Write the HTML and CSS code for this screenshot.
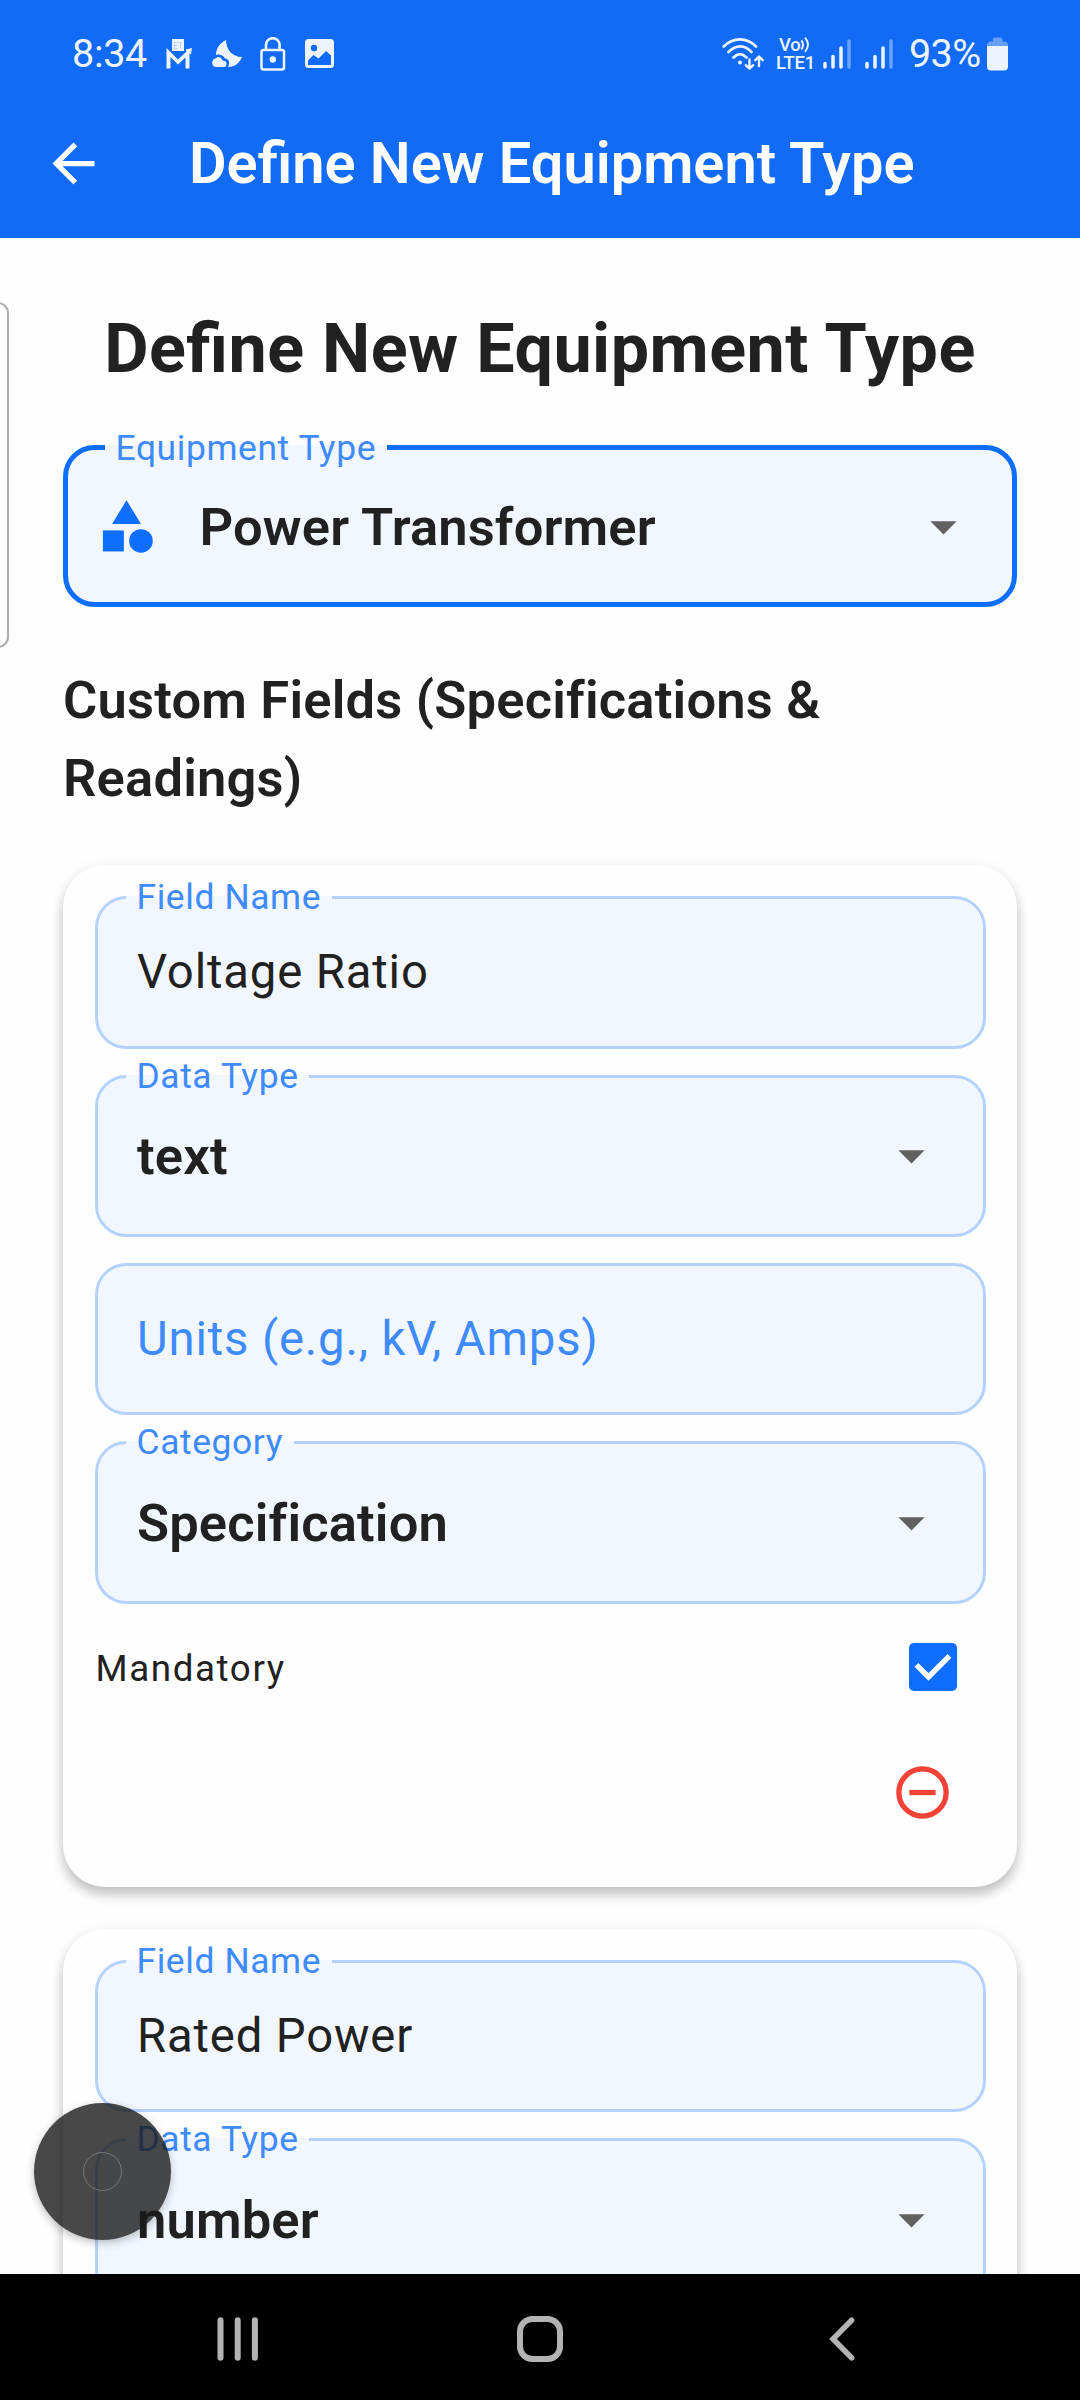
FILE: index.html
```html
<!DOCTYPE html>
<html lang="en">
<head>
<meta charset="utf-8">
<title>Define New Equipment Type</title>
<link rel="stylesheet" href="styles.css">
</head>
<body>
<div class="screen">
  <header class="top">
    <div class="status">
      <div class="status-left">
        <span class="clock">8:34</span>
        <svg class="st-m" viewBox="0 0 27 30" width="27" height="30"><rect x="6" y="0" width="12" height="12" fill="#eef4ff"/><path d="M8 3.500h3.500M8 6.500h3M8 9.500h3.500M8.500 3.500v6M12.500 3.500h4M14.500 3.500v6" stroke="#a9c6fb" stroke-width=".8" fill="none"/><path d="M.5 29.500V9L12 20.500 20.500 12.500 19.500 10.500 26 9 25 15.500 23.500 14.500V29.500H19.500V18.500L12 25.500 4.500 18V29.500Z" fill="#eef4ff"/></svg>
        <svg class="st-moon" viewBox="0 0 31 28" width="31" height="28"><path d="M15 0C15 9 21 17 31 17 28 24 23 27 17 27 19.500 23 18 19 14 18.500 11.500 14.500 8 14 5 15 5 8 9 3 15 0Z" fill="#eef4ff"/><path d="M4.500 27A4.400 4.400 0 0 1 4.500 18.500C7 15.500 10.500 17 11.500 20.500 17 20.500 16.500 27 13 27Z" fill="#eef4ff"/></svg>
        <svg class="st-lock" viewBox="0 0 26 34" width="26" height="34"><rect x="1.500" y="13" width="22.500" height="19.500" rx="2" fill="none" stroke="#eef4ff" stroke-width="2.500"/><path d="M6 13V8a6.800 6.800 0 0 1 13.600 0v5" fill="none" stroke="#eef4ff" stroke-width="2.600"/><circle cx="12.800" cy="22.500" r="3.200" fill="#eef4ff"/></svg>
        <svg class="st-img" viewBox="0 0 29 29" width="29" height="29"><rect width="29" height="29" rx="3.500" fill="#eef4ff"/><circle cx="9" cy="9" r="3.200" fill="#116bf4"/><path d="M3 21.500 8.500 16l5 3.500L21 12l5 4.500v9.500H3Z" fill="#116bf4"/></svg>
      </div>
      <div class="status-right">
        <svg viewBox="0 0 43 33" width="43" height="33" fill="none" stroke="#eef4ff" stroke-width="2.700" stroke-linecap="round"><path d="M1.800 9.500C11 0 25 0 34 9.500M6.500 15C14 7.500 22.500 7.500 29.500 15M11.500 20.500C16 16 20 16 24.500 20.500"/><circle cx="18" cy="25.500" r="2" fill="#eef4ff" stroke="none"/><path d="M27.500 22.500v9M23.800 28.200l3.700 3.500 3.700-3.500M37 29v-9M33.300 23.200l3.700-3.500 3.700 3.500" stroke-width="2.400"/></svg>
        <div class="volte">
          <div class="vo">Vo<svg viewBox="0 0 12 18" width="11" height="17" fill="none" stroke="#eef4ff" stroke-width="2"><path d="M1.500 4.500q3.500 4.500 0 10M5.500 1.500q6.500 7.500 0 15.500"/></svg></div>
          <div class="lte">LTE1</div>
        </div>
        <svg class="sig" viewBox="0 0 29 30" width="29" height="30" stroke-width="3.500" stroke-linecap="round" stroke="#eef4ff"><path d="M2 24.500V28M10 17.500V28M18 9V28"/><path d="M26 2V28" stroke="#6ba2fb"/></svg>
        <svg class="sig sig2" viewBox="0 0 29 30" width="29" height="30" stroke-width="3.500" stroke-linecap="round" stroke="#eef4ff"><path d="M2 24.500V28M10 17.500V28M18 9V28"/><path d="M26 2V28" stroke="#6ba2fb"/></svg>
        <span class="pct">93%</span>
        <svg viewBox="0 0 21 34" width="21" height="34"><path d="M0 9V8Q0 4.500 4 4.500H6V2Q6 .5 7.500 .5H14Q15.500 .5 15.500 2V4.500H17Q21 4.500 21 8V9Z" fill="#659ff9"/><path d="M0 9H21V29.500Q21 33.500 17 33.500H4Q0 33.500 0 29.500Z" fill="#eef4ff"/></svg>
      </div>
    </div>
    <div class="appbar">
      <svg class="back" viewBox="0 0 24 24" width="63" height="63"><path d="M20 11H7.830l5.590-5.590L12 4l-8 8 8 8 1.410-1.410L7.830 13H20z" fill="#fff"/></svg>
      <h1 class="bar-title">Define New Equipment Type</h1>
    </div>
  </header>

  <main class="content">
    <h2 class="heading">Define New Equipment Type</h2>
    <div class="field select active">
      <span class="label">Equipment Type</span>
      <svg class="category" viewBox="0 0 24 24" width="63" height="63" fill="#0d6eff"><path d="M12 2l-5.500 9h11z"/><circle cx="17.500" cy="17.500" r="4.500"/><path d="M3 13.500h8v8H3z"/></svg>
      <span class="value strong">Power Transformer</span>
      <svg class="caret" viewBox="0 0 24 24" width="63" height="63"><path d="M7 10l5 5 5-5z"/></svg>
    </div>
    <h3 class="subheading">Custom Fields (Specifications &amp; Readings)</h3>

    <section class="card">
      <div class="field"><span class="label">Field Name</span><span class="value">Voltage Ratio</span></div>
      <div class="field select"><span class="label">Data Type</span><span class="value strong">text</span><svg class="caret" viewBox="0 0 24 24" width="63" height="63"><path d="M7 10l5 5 5-5z"/></svg></div>
      <div class="field"><span class="value hint">Units (e.g., kV, Amps)</span></div>
      <div class="field select"><span class="label">Category</span><span class="value strong">Specification</span><svg class="caret" viewBox="0 0 24 24" width="63" height="63"><path d="M7 10l5 5 5-5z"/></svg></div>
      <div class="actions">
        <div class="row"><span class="mandatory">Mandatory</span><svg class="check" viewBox="0 0 18 18" width="48" height="48"><rect width="18" height="18" rx="1.800" fill="#0d6eff"/><path d="M2.800 8.200l4.500 4.500 7.900-7.900" fill="none" stroke="#fff" stroke-width="2"/></svg></div>
        <div class="row remove"><svg viewBox="0 0 24 24" width="63" height="63" fill="none" stroke="#f44336" stroke-width="2"><circle cx="12" cy="12" r="9"/><path d="M7 12h10"/></svg></div>
      </div>
    </section>

    <section class="card">
      <div class="field"><span class="label">Field Name</span><span class="value">Rated Power</span></div>
      <div class="field select"><span class="label">Data Type</span><span class="value strong">number</span><svg class="caret" viewBox="0 0 24 24" width="63" height="63"><path d="M7 10l5 5 5-5z"/></svg></div>
    </section>
  </main>

  <nav class="navbar">
    <svg viewBox="0 0 42 44" width="42" height="44" stroke="#b3b3b3" stroke-width="6" stroke-linecap="round"><path d="M3.500 3.200V40.800M20.700 3.200V40.800M37.900 3.200V40.800"/></svg>
    <svg class="nav-home" viewBox="0 0 46 46" width="46" height="46"><rect x="3" y="3" width="40" height="40" rx="12.500" fill="none" stroke="#b3b3b3" stroke-width="6"/></svg>
    <svg class="nav-back" viewBox="0 0 26 44" width="26" height="44"><path d="M22.600 3.200L4 22 22.600 40.800" fill="none" stroke="#b3b3b3" stroke-width="5.500" stroke-linecap="round"/></svg>
  </nav>

  <div class="edge-handle"></div>
  <div class="assist"><div class="assist-ring"></div></div>
</div>
</body>
</html>
```
FILE: styles.css
```css
* { box-sizing: border-box; margin: 0; padding: 0; }
body { background: #fefefe; font-family: Roboto, "Noto Sans", sans-serif; color: #212121; }
svg { display: block; flex: none; }
.screen { position: relative; width: 1080px; height: 2400px; overflow: hidden; display: flex; flex-direction: column; }

.top { height: 238px; background: #116bf4; color: #fff; flex: none; }
.status { height: 90px; display: flex; justify-content: space-between; padding: 0 72px 0 72px; color: #eef4ff; }
.status-left, .status-right { display: flex; align-items: center; padding-top: 17px; }
.clock, .pct { font-size: 39.5px; line-height: 46px; white-space: nowrap; }
.clock { width: 94px; letter-spacing: -0.3px; }
.st-moon { margin-left: 18px; }
.st-lock { margin-left: 18px; }
.st-img { margin-left: 19px; }
.volte { width: 40px; margin-left: 11px; font-weight: 500; font-size: 18.500px; line-height: 18px; white-space: nowrap; }
.vo { display: flex; align-items: center; padding-left: 3px; letter-spacing: -0.3px; }
.lte { letter-spacing: -0.2px; }
.sig { margin-left: 7px; }
.sig2 { margin-left: 13px; }
.pct { width: 78px; margin-left: 15px; letter-spacing: -0.6px; }

.appbar { height: 147px; display: flex; align-items: center; padding-left: 42px; }
.bar-title { margin: -1px 0 0 84px; font-size: 57.75px; font-weight: 600; line-height: 68px; white-space: nowrap; }

.content { flex: 1; min-height: 0; overflow: hidden; padding: 70px 63px 0; }
.heading { font-size: 68.25px; font-weight: 700; line-height: 82px; text-align: center; white-space: nowrap; margin-bottom: 55px; letter-spacing: .5px; font-feature-settings: "liga" 1; }
.subheading { font-size: 52.5px; font-weight: 600; line-height: 78px; margin: 54px 0 47.5px; letter-spacing: .2px; }

.field { position: relative; display: flex; align-items: center; height: 152.25px; padding: 0 39.5px; background: #f2f7ff; border: 3px solid #b4d2ff; border-radius: 31.5px; }
.select { height: 162.25px; }
.active { border: 5px solid #0d6eff; padding: 0 37px 0 26.5px; }
.label { position: absolute; left: 28.5px; top: -22px; padding: 0 10.5px; font-size: 35.4px; line-height: 40px; letter-spacing: .6px; color: #3d8bff; white-space: nowrap; background: linear-gradient(#f2f7ff, #f2f7ff) no-repeat 0 19px / 100% 3px; }
.active .label { left: 37px; top: -22px; background: linear-gradient(#f2f7ff, #f2f7ff) no-repeat 0 17px / 100% 5px; }
.value { flex: 1; font-size: 47.25px; line-height: 60px; letter-spacing: .85px; white-space: nowrap; }
.strong { font-size: 52.5px; font-weight: 600; letter-spacing: .15px; padding-top: 1.5px; }
.hint { color: #3d8bff; }
.category { margin-right: 42px; }
.caret path { fill: #616161; }

.card { display: flex; flex-direction: column; gap: 26.1px; padding: 31.500px; margin-bottom: 41.500px; border-radius: 42px; background: #fefefe; box-shadow: 0 8px 12px rgba(0, 0, 0, .2), 0 3px 16px rgba(0, 0, 0, .08); }
.actions { margin-top: -26.1px; }
.row { height: 126px; display: flex; align-items: center; justify-content: space-between; }
.mandatory { font-size: 36.75px; line-height: 44px; letter-spacing: 1.6px; padding: 4px 0 0 1px; }
.check { margin-right: 28.500px; }
.remove { justify-content: flex-end; padding-right: 31.5px; }

.navbar { position: relative; height: 126px; flex: none; background: #000; display: flex; align-items: center; padding: 4px 0 0 217px; }
.nav-home { margin-left: 258px; }
.nav-back { margin-left: 266px; }

.edge-handle { position: absolute; left: -20px; top: 302px; width: 29px; height: 346px; border: 2px solid #adadad; border-radius: 11px; background: #fefefe; }
.assist { position: absolute; left: 34px; top: 2103px; width: 137px; height: 137px; border-radius: 50%; background: rgba(26, 26, 26, .8); box-shadow: 0 3px 8px rgba(0, 0, 0, .25); display: flex; align-items: center; justify-content: center; }
.assist-ring { width: 39px; height: 39px; border: 1px solid #777; border-radius: 50%; }
```
